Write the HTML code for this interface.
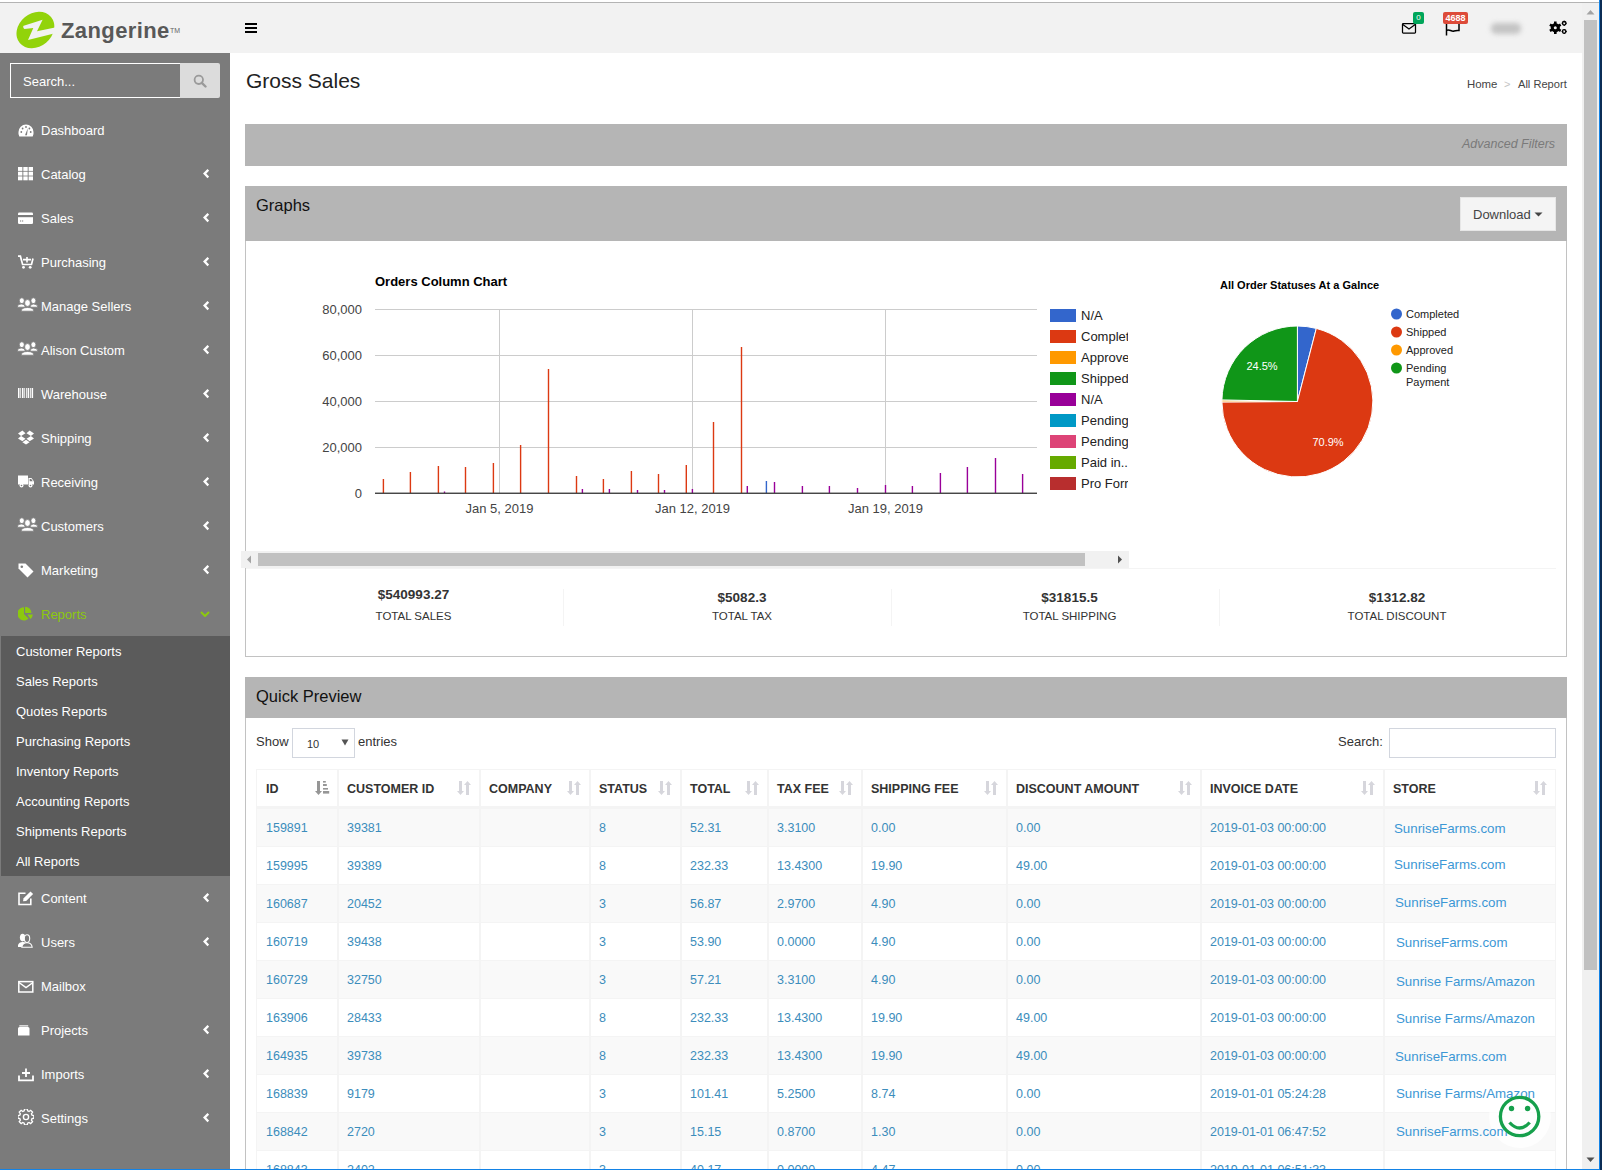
<!DOCTYPE html>
<html><head><meta charset="utf-8">
<style>
*{box-sizing:border-box;margin:0;padding:0}
html,body{width:1602px;height:1170px;overflow:hidden;background:#fff;font-family:"Liberation Sans",sans-serif;position:relative}
.a{position:absolute}
#topline{left:0;top:2px;width:1599px;height:1px;background:#b4b4b4}
#header{left:0;top:3px;width:1582px;height:50px;background:#f2f2f2}
#sidebar{left:0;top:53px;width:230px;height:1117px;background:#7b7b7b}
.mi{position:absolute;left:41px;color:#fff;font-size:13px;line-height:16px;white-space:nowrap}
.ico{position:absolute;left:18px;width:16px;height:16px}
.chev{position:absolute;left:203px;width:6px;height:10px}
#submenu{left:1px;top:636px;width:229px;height:240px;background:#5b5b5b}
.si{position:absolute;left:16px;color:#fff;font-size:13px;line-height:16px;white-space:nowrap}
#vscroll{left:1582px;top:3px;width:17px;height:1166px;background:#f0f0f0}
#blueR{left:1599px;top:0;width:1px;height:1170px;background:#1383e6}
#navyR{left:1600px;top:0;width:2px;height:1170px;background:#0b2d55}
#blueB{left:0;top:1169px;width:1600px;height:1px;background:#1383e6}
.ph{position:absolute;background:#b5b5b5}
.link{color:#3c8dbc}

</style></head><body>
<div class="a" id="topline"></div>
<div class="a" id="header"></div>
<div class="a" id="sidebar"></div>
<div class="a" id="submenu"></div>
<!-- logo -->
<svg class="a" style="left:14px;top:10px;width:42px;height:40px" viewBox="14 10 42 40">
<ellipse cx="35.4" cy="30" rx="20.4" ry="16.6" transform="rotate(-40 35.4 30)" fill="#92d30a"/>
<path d="M23.2 26.3Q23 28.6 24.5 29L33.3 28 28 40 56 33 55 27.5 37 31.3 42.6 19.7 24.5 25.4Q23.4 25.6 23.2 26.3Z" fill="#f2f2f2"/>
</svg>
<div class="a" style="left:61px;top:18px;font-size:22px;line-height:26px;font-weight:bold;color:#585858;letter-spacing:0.4px;white-space:nowrap">Zangerine</div>
<div class="a" style="left:170px;top:27px;font-size:7px;line-height:8px;color:#666">TM</div>
<!-- hamburger -->
<div class="a" style="left:245px;top:23px;width:12px;height:2px;background:#000"></div>
<div class="a" style="left:245px;top:27px;width:12px;height:2px;background:#000"></div>
<div class="a" style="left:245px;top:31px;width:12px;height:2px;background:#000"></div>
<!-- envelope -->
<svg class="a" style="left:1401px;top:22px;width:16px;height:12px" viewBox="0 0 16 12"><rect x="1.5" y="1.5" width="13" height="9.5" rx="0.8" fill="none" stroke="#000" stroke-width="1.25"/><path d="M1.8 2.5L8 7 14.2 2.5" fill="none" stroke="#000" stroke-width="1.25"/></svg>
<div class="a" style="left:1413px;top:12px;width:11px;height:12px;background:#00a65a;border-radius:2px;color:#fff;font-size:8px;line-height:12px;text-align:center">0</div>
<!-- flag -->
<svg class="a" style="left:1444px;top:22px;width:18px;height:14px" viewBox="0 0 18 14"><path d="M2.5 1V13.5" stroke="#000" stroke-width="1.5"/><path d="M2.5 8.5C5 6.5 7.5 10 10 9 12 8.2 14 8.5 15 8.5V1" fill="none" stroke="#000" stroke-width="1.5"/></svg>
<div class="a" style="left:1443px;top:12px;width:25px;height:12px;background:#dd4b39;border-radius:2px;color:#fff;font-size:9px;font-weight:bold;line-height:12px;text-align:center">4688</div>
<!-- blurred name -->
<div class="a" style="left:1491px;top:23px;width:30px;height:11px;background:#c4c4c4;border-radius:5px;filter:blur(2.5px)"></div>
<!-- gears -->
<svg class="a" style="left:1548px;top:20px;width:21px;height:16px" viewBox="1548 20 21 16">
<g fill="#000"><circle cx="1555.3" cy="27.8" r="4.6"/>
<g stroke="#000" stroke-width="2.6"><path d="M1555.3 21.6V34M1549.9 24.7L1560.7 30.9M1549.9 30.9L1560.7 24.7"/></g></g>
<circle cx="1555.3" cy="27.8" r="1.5" fill="#f2f2f2"/>
<g stroke="#000" stroke-width="1.3" fill="none"><circle cx="1564.2" cy="23.3" r="1.8"/><circle cx="1564.2" cy="31.5" r="1.8"/></g>
<g stroke="#000" stroke-width="1.1"><path d="M1564.2 20.7V25.9M1561.7 23.3H1566.7M1564.2 28.9V34.1M1561.7 31.5H1566.7"/></g>
<circle cx="1564.2" cy="23.3" r="0.9" fill="#f2f2f2"/><circle cx="1564.2" cy="31.5" r="0.9" fill="#f2f2f2"/>
</svg>
<!-- sidebar search -->
<div class="a" style="left:10px;top:63px;width:171px;height:35px;border:1px solid #fff;border-right:none;background:#7b7b7b"></div>
<div class="a" style="left:23px;top:74px;font-size:13px;line-height:16px;color:#fff">Search...</div>
<div class="a" style="left:180px;top:63px;width:40px;height:35px;background:#dcdcdc;border-radius:0 2px 2px 0"></div>
<svg class="a" style="left:193px;top:74px;width:14px;height:14px" viewBox="0 0 14 14"><circle cx="5.8" cy="5.8" r="4.2" fill="none" stroke="#9a9a9a" stroke-width="1.8"/><path d="M8.8 8.8L12.5 12.5" stroke="#9a9a9a" stroke-width="2.4" stroke-linecap="round"/></svg>

<div class="mi" style="top:123px;color:#fff">Dashboard</div>
<svg class="ico" style="top:123px" viewBox="0 0 16 16"><path d="M8 1.5A7.5 7.5 0 0 0 0.5 9 7 7 0 0 0 1.3 13.5H14.7A7 7 0 0 0 15.5 9 7.5 7.5 0 0 0 8 1.5Z" fill="#fff"/><circle cx="3.3" cy="9" r="0.9" fill="#7b7b7b"/><circle cx="4.6" cy="5.5" r="0.9" fill="#7b7b7b"/><circle cx="8" cy="4" r="0.9" fill="#7b7b7b"/><circle cx="12.7" cy="9" r="0.9" fill="#7b7b7b"/><circle cx="11.4" cy="5.5" r="0.9" fill="#7b7b7b"/><path d="M7 12.3L9.8 5.2L9 12.3Z" fill="#7b7b7b"/></svg>
<div class="mi" style="top:167px;color:#fff">Catalog</div>
<svg class="ico" style="top:165px" viewBox="0 0 16 16"><g fill="#fff"><rect x="0" y="2" width="4.4" height="3.9"/><rect x="5.3" y="2" width="4.4" height="3.9"/><rect x="10.6" y="2" width="4.4" height="3.9"/><rect x="0" y="6.7" width="4.4" height="3.9"/><rect x="5.3" y="6.7" width="4.4" height="3.9"/><rect x="10.6" y="6.7" width="4.4" height="3.9"/><rect x="0" y="11.4" width="4.4" height="3.9"/><rect x="5.3" y="11.4" width="4.4" height="3.9"/><rect x="10.6" y="11.4" width="4.4" height="3.9"/></g></svg>
<svg class="chev" style="top:169px" viewBox="0 0 6 10"><path d="M5.3 0.8L1.6 4.6 5.3 8.4" stroke="#fff" stroke-width="2.3" fill="none"/></svg>
<div class="mi" style="top:211px;color:#fff">Sales</div>
<svg class="ico" style="top:208.5px" viewBox="0 0 16 16"><rect x="0" y="3.5" width="15" height="11.5" rx="1.3" fill="#fff"/><rect x="0" y="6" width="15" height="2.2" fill="#7b7b7b"/><rect x="2" y="11.5" width="1.2" height="1" fill="#7b7b7b"/><rect x="4" y="11.5" width="1.2" height="1" fill="#7b7b7b"/></svg>
<svg class="chev" style="top:213px" viewBox="0 0 6 10"><path d="M5.3 0.8L1.6 4.6 5.3 8.4" stroke="#fff" stroke-width="2.3" fill="none"/></svg>
<div class="mi" style="top:255px;color:#fff">Purchasing</div>
<svg class="ico" style="top:253px" viewBox="0 0 16 16"><path d="M0 3.2H2.4L4.6 11.5H13.5L15 5.5" stroke="#fff" stroke-width="1.7" fill="none"/><path d="M5 6.6H13M9 4V9.5" stroke="#fff" stroke-width="1.6"/><circle cx="5.5" cy="14.3" r="1.4" fill="#fff"/><circle cx="12.2" cy="14.3" r="1.4" fill="#fff"/></svg>
<svg class="chev" style="top:257px" viewBox="0 0 6 10"><path d="M5.3 0.8L1.6 4.6 5.3 8.4" stroke="#fff" stroke-width="2.3" fill="none"/></svg>
<div class="mi" style="top:299px;color:#fff">Manage Sellers</div>
<svg class="a" style="left:17px;top:296.5px;width:22px;height:16px" viewBox="0 0 22 16"><g fill="#fff" stroke="#7b7b7b" stroke-width="0.8"><ellipse cx="4.8" cy="3.7" rx="2.5" ry="2.9"/><path d="M0.3 10.2Q0.5 7 4.8 7 8 7 8.3 10.2Z"/><ellipse cx="16.4" cy="3.7" rx="2.5" ry="2.9"/><path d="M13 10.2Q13.3 7 16.4 7 20.6 7 20.9 10.2Z"/><ellipse cx="10.5" cy="6" rx="2.9" ry="3.4"/><path d="M4.1 14.2Q4.4 10.5 10.5 10.5 16.6 10.5 16.9 14.2Z"/></g></svg>
<svg class="chev" style="top:301px" viewBox="0 0 6 10"><path d="M5.3 0.8L1.6 4.6 5.3 8.4" stroke="#fff" stroke-width="2.3" fill="none"/></svg>
<div class="mi" style="top:343px;color:#fff">Alison Custom</div>
<svg class="a" style="left:17px;top:340.5px;width:22px;height:16px" viewBox="0 0 22 16"><g fill="#fff" stroke="#7b7b7b" stroke-width="0.8"><ellipse cx="4.8" cy="3.7" rx="2.5" ry="2.9"/><path d="M0.3 10.2Q0.5 7 4.8 7 8 7 8.3 10.2Z"/><ellipse cx="16.4" cy="3.7" rx="2.5" ry="2.9"/><path d="M13 10.2Q13.3 7 16.4 7 20.6 7 20.9 10.2Z"/><ellipse cx="10.5" cy="6" rx="2.9" ry="3.4"/><path d="M4.1 14.2Q4.4 10.5 10.5 10.5 16.6 10.5 16.9 14.2Z"/></g></svg>
<svg class="chev" style="top:345px" viewBox="0 0 6 10"><path d="M5.3 0.8L1.6 4.6 5.3 8.4" stroke="#fff" stroke-width="2.3" fill="none"/></svg>
<div class="mi" style="top:387px;color:#fff">Warehouse</div>
<svg class="ico" style="top:385px" viewBox="0 0 16 16"><g fill="#fff"><rect x="0" y="3" width="1.5" height="10"/><rect x="2.3" y="3" width="0.8" height="10"/><rect x="4" y="3" width="1.5" height="10"/><rect x="6.3" y="3" width="0.8" height="10"/><rect x="8" y="3" width="0.8" height="10"/><rect x="9.6" y="3" width="1.6" height="10"/><rect x="12" y="3" width="0.8" height="10"/><rect x="13.6" y="3" width="1.5" height="10"/></g></svg>
<svg class="chev" style="top:389px" viewBox="0 0 6 10"><path d="M5.3 0.8L1.6 4.6 5.3 8.4" stroke="#fff" stroke-width="2.3" fill="none"/></svg>
<div class="mi" style="top:431px;color:#fff">Shipping</div>
<svg class="ico" style="top:429px" viewBox="0 0 16 16"><g fill="#fff"><path d="M4.4 1.5L0 4.4 3.1 6.9 7.5 4.2Z"/><path d="M11.6 1.5L16 4.4 12.9 6.9 8.5 4.2Z"/><path d="M0 9.4L4.4 12.3 7.5 9.7 3.1 6.9Z"/><path d="M16 9.4L11.6 12.3 8.5 9.7 12.9 6.9Z"/><path d="M4.4 13.2L8 15.5 11.6 13.2 8 10.8Z"/></g></svg>
<svg class="chev" style="top:433px" viewBox="0 0 6 10"><path d="M5.3 0.8L1.6 4.6 5.3 8.4" stroke="#fff" stroke-width="2.3" fill="none"/></svg>
<div class="mi" style="top:475px;color:#fff">Receiving</div>
<svg class="ico" style="top:473px" viewBox="0 0 16 16"><g fill="#fff"><rect x="0" y="2.5" width="10" height="9"/><path d="M10.5 5H13.5L16 8.5V11.5H10.5Z"/><circle cx="3.5" cy="12.5" r="2"/><circle cx="12.5" cy="12.5" r="2"/></g><circle cx="3.5" cy="12.5" r="0.8" fill="#7b7b7b"/><circle cx="12.5" cy="12.5" r="0.8" fill="#7b7b7b"/><path d="M11.7 6H13.2L14.8 8.3H11.7Z" fill="#7b7b7b"/></svg>
<svg class="chev" style="top:477px" viewBox="0 0 6 10"><path d="M5.3 0.8L1.6 4.6 5.3 8.4" stroke="#fff" stroke-width="2.3" fill="none"/></svg>
<div class="mi" style="top:519px;color:#fff">Customers</div>
<svg class="a" style="left:17px;top:516.5px;width:22px;height:16px" viewBox="0 0 22 16"><g fill="#fff" stroke="#7b7b7b" stroke-width="0.8"><ellipse cx="4.8" cy="3.7" rx="2.5" ry="2.9"/><path d="M0.3 10.2Q0.5 7 4.8 7 8 7 8.3 10.2Z"/><ellipse cx="16.4" cy="3.7" rx="2.5" ry="2.9"/><path d="M13 10.2Q13.3 7 16.4 7 20.6 7 20.9 10.2Z"/><ellipse cx="10.5" cy="6" rx="2.9" ry="3.4"/><path d="M4.1 14.2Q4.4 10.5 10.5 10.5 16.6 10.5 16.9 14.2Z"/></g></svg>
<svg class="chev" style="top:521px" viewBox="0 0 6 10"><path d="M5.3 0.8L1.6 4.6 5.3 8.4" stroke="#fff" stroke-width="2.3" fill="none"/></svg>
<div class="mi" style="top:563px;color:#fff">Marketing</div>
<svg class="ico" style="top:562px" viewBox="0 0 16 16"><path d="M0.5 1.5H7.5L15.5 9.5 9.5 15.5 0.5 6.5Z" fill="#fff"/><circle cx="3.8" cy="4.8" r="1.3" fill="#7b7b7b"/></svg>
<svg class="chev" style="top:565px" viewBox="0 0 6 10"><path d="M5.3 0.8L1.6 4.6 5.3 8.4" stroke="#fff" stroke-width="2.3" fill="none"/></svg>
<div class="mi" style="top:607px;color:#8cc90e">Reports</div>
<svg class="ico" style="top:605.5px" viewBox="0 0 16 16"><g fill="#8cc90e"><path d="M6 1.2V7.9L10.5 12.6A6.6 6.6 0 1 1 6 1.2Z"/><path d="M7.1 0.8V6.9H13.5A6.4 6.4 0 0 0 7.1 0.8Z"/><path d="M9.3 8.4H14.8A6.6 6.6 0 0 1 12.6 12.9Z"/></g></svg>
<svg class="a" style="left:200px;top:611px;width:10px;height:6px" viewBox="0 0 10 6"><path d="M1 1L5 5 9 1" stroke="#8cc90e" stroke-width="2" fill="none"/></svg>
<div class="mi" style="top:891px;color:#fff">Content</div>
<svg class="ico" style="top:889.5px" viewBox="0 0 16 16"><path d="M7.5 3.2H1V14.5H12.8V8.5" stroke="#fff" stroke-width="1.6" fill="none"/><path d="M5 11.2L5.6 8.3 12.5 1.4 15.1 4 8.2 10.9Z" fill="#fff"/></svg>
<svg class="chev" style="top:893px" viewBox="0 0 6 10"><path d="M5.3 0.8L1.6 4.6 5.3 8.4" stroke="#fff" stroke-width="2.3" fill="none"/></svg>
<div class="mi" style="top:935px;color:#fff">Users</div>
<svg class="ico" style="top:933px" viewBox="0 0 16 16"><g fill="#fff"><ellipse cx="4.6" cy="4.6" rx="2.7" ry="3.8"/><path d="M-0.4 14C-0.2 11 1.5 9.3 4.5 9.1 6 9.1 7 9.5 7 9.5L3.5 14Z"/></g><g fill="#7b7b7b" stroke="#fff" stroke-width="1.1"><path d="M3.8 14.3C4.2 11.2 6.5 9.7 9 9.7 11.5 9.7 13.8 11.2 14.2 14.3Z"/><ellipse cx="9" cy="5.6" rx="2.7" ry="3.9"/></g></svg>
<svg class="chev" style="top:937px" viewBox="0 0 6 10"><path d="M5.3 0.8L1.6 4.6 5.3 8.4" stroke="#fff" stroke-width="2.3" fill="none"/></svg>
<div class="mi" style="top:979px;color:#fff">Mailbox</div>
<svg class="ico" style="top:977.5px" viewBox="0 0 16 16"><rect x="0.8" y="3.6" width="14" height="10.4" stroke="#fff" stroke-width="1.5" fill="none"/><path d="M1 4.5L8 9.5 15 4.5" stroke="#fff" stroke-width="1.5" fill="none"/></svg>
<div class="mi" style="top:1023px;color:#fff">Projects</div>
<svg class="ico" style="top:1020.5px" viewBox="0 0 16 16"><path d="M0 7.5A1.5 1.5 0 0 1 1.5 6H10A1.5 1.5 0 0 1 11.5 7.5V14.5H0Z" fill="#fff"/><path d="M1.3 4.3H10.2V5.5H1.3Z" fill="#fff"/></svg>
<svg class="chev" style="top:1025px" viewBox="0 0 6 10"><path d="M5.3 0.8L1.6 4.6 5.3 8.4" stroke="#fff" stroke-width="2.3" fill="none"/></svg>
<div class="mi" style="top:1067px;color:#fff">Imports</div>
<svg class="ico" style="top:1066px" viewBox="0 0 16 16"><path d="M1 9.5V14.3H15V9.5" stroke="#fff" stroke-width="1.8" fill="none"/><path d="M8 2.5V11M4 7H12" stroke="#fff" stroke-width="1.8"/></svg>
<svg class="chev" style="top:1069px" viewBox="0 0 6 10"><path d="M5.3 0.8L1.6 4.6 5.3 8.4" stroke="#fff" stroke-width="2.3" fill="none"/></svg>
<div class="mi" style="top:1111px;color:#fff">Settings</div>
<svg class="ico" style="top:1109px" viewBox="0 0 16 16"><g fill="none" stroke="#fff" stroke-width="1.4"><path d="M6.6 0.9H9.4L9.8 2.9 11.3 3.6 13 2.4 15 4.4 13.8 6.1 14.4 7.6 16.4 8V10.8L14.4 11.2 13.8 12.7 15 14.4 13 16.4 11.3 15.2 9.8 15.9 9.4 17.9H6.6L6.2 15.9 4.7 15.2 3 16.4 1 14.4 2.2 12.7 1.6 11.2-0.4 10.8V8L1.6 7.6 2.2 6.1 1 4.4 3 2.4 4.7 3.6 6.2 2.9Z" transform="translate(0.3 -1) scale(0.95)"/><circle cx="8" cy="8" r="2.6"/></g></svg>
<svg class="chev" style="top:1113px" viewBox="0 0 6 10"><path d="M5.3 0.8L1.6 4.6 5.3 8.4" stroke="#fff" stroke-width="2.3" fill="none"/></svg>
<div class="si" style="top:644px">Customer Reports</div>
<div class="si" style="top:674px">Sales Reports</div>
<div class="si" style="top:704px">Quotes Reports</div>
<div class="si" style="top:734px">Purchasing Reports</div>
<div class="si" style="top:764px">Inventory Reports</div>
<div class="si" style="top:794px">Accounting Reports</div>
<div class="si" style="top:824px">Shipments Reports</div>
<div class="si" style="top:854px">All Reports</div>
<div class="a" style="left:246px;top:69px;font-size:21px;line-height:24px;color:#222">Gross Sales</div>
<div class="a" style="left:1467px;top:77px;font-size:11.4px;line-height:14px;color:#444;white-space:nowrap">Home</div>
<div class="a" style="left:1504px;top:77px;font-size:11px;line-height:14px;color:#c4c4c4;white-space:nowrap">&gt;</div>
<div class="a" style="left:1518px;top:77px;font-size:11.1px;line-height:14px;color:#444;white-space:nowrap">All Report</div>
<div class="ph" style="left:245px;top:124px;width:1322px;height:42px"></div>
<div class="a" style="left:1462px;top:137px;font-size:12.5px;line-height:14px;color:#7a7a7a;font-style:italic">Advanced Filters</div>
<!-- graphs panel -->
<div class="a" style="left:245px;top:186px;width:1322px;height:471px;border:1px solid #c2c2c2;border-top:none"></div>
<div class="ph" style="left:245px;top:186px;width:1322px;height:55px"></div>
<div class="a" style="left:256px;top:196px;font-size:16.5px;line-height:19px;color:#111">Graphs</div>
<div class="a" style="left:1460px;top:197px;width:96px;height:34px;background:#f4f4f4;border:1px solid #e6e6e6"></div>
<div class="a" style="left:1473px;top:207px;font-size:13px;line-height:15px;color:#444">Download</div>
<svg class="a" style="left:1534px;top:212px;width:9px;height:5px" viewBox="0 0 9 5"><path d="M0.5 0.5H8.5L4.5 4.5Z" fill="#444"/></svg>

<svg class="a" style="left:246px;top:241px;width:884px;height:330px" viewBox="246 241 884 330" font-family="Liberation Sans">
<text x="375" y="286" font-size="13" font-weight="bold" fill="#000">Orders Column Chart</text>
<rect x="375" y="309.0" width="662" height="1" fill="#cccccc"/>
<text x="362" y="314.0" font-size="13" fill="#444" text-anchor="end">80,000</text>
<rect x="375" y="355.0" width="662" height="1" fill="#cccccc"/>
<text x="362" y="360.0" font-size="13" fill="#444" text-anchor="end">60,000</text>
<rect x="375" y="401.0" width="662" height="1" fill="#cccccc"/>
<text x="362" y="406.0" font-size="13" fill="#444" text-anchor="end">40,000</text>
<rect x="375" y="447.0" width="662" height="1" fill="#cccccc"/>
<text x="362" y="452.0" font-size="13" fill="#444" text-anchor="end">20,000</text>
<text x="362" y="498.0" font-size="13" fill="#444" text-anchor="end">0</text>
<rect x="499.0" y="309" width="1" height="184" fill="#cccccc"/>
<text x="499.5" y="513" font-size="13" fill="#444" text-anchor="middle">Jan 5, 2019</text>
<rect x="692.0" y="309" width="1" height="184" fill="#cccccc"/>
<text x="692.5" y="513" font-size="13" fill="#444" text-anchor="middle">Jan 12, 2019</text>
<rect x="885.0" y="309" width="1" height="184" fill="#cccccc"/>
<text x="885.5" y="513" font-size="13" fill="#444" text-anchor="middle">Jan 19, 2019</text>
<rect x="382.7" y="479" width="1.4" height="14" fill="#dc3912"/>
<rect x="409.7" y="472" width="1.4" height="21" fill="#dc3912"/>
<rect x="437.7" y="466" width="1.4" height="27" fill="#dc3912"/>
<rect x="464.8" y="467" width="1.4" height="26" fill="#dc3912"/>
<rect x="492.7" y="463" width="1.4" height="30" fill="#dc3912"/>
<rect x="519.9" y="445" width="1.4" height="48" fill="#dc3912"/>
<rect x="547.8" y="369" width="1.4" height="124" fill="#dc3912"/>
<rect x="575.8" y="476" width="1.4" height="17" fill="#dc3912"/>
<rect x="602.6999999999999" y="479" width="1.4" height="14" fill="#dc3912"/>
<rect x="630.6999999999999" y="471" width="1.4" height="22" fill="#dc3912"/>
<rect x="657.8" y="474" width="1.4" height="19" fill="#dc3912"/>
<rect x="685.5999999999999" y="465" width="1.4" height="28" fill="#dc3912"/>
<rect x="712.8" y="422" width="1.4" height="71" fill="#dc3912"/>
<rect x="740.8" y="347" width="1.4" height="146" fill="#dc3912"/>
<rect x="443.8" y="491.5" width="1.4" height="1.5" fill="#990099"/>
<rect x="581.6999999999999" y="489" width="1.4" height="4" fill="#990099"/>
<rect x="608.6999999999999" y="489" width="1.4" height="4" fill="#990099"/>
<rect x="636.8" y="490" width="1.4" height="3" fill="#990099"/>
<rect x="663.8" y="490" width="1.4" height="3" fill="#990099"/>
<rect x="691.6999999999999" y="489" width="1.4" height="4" fill="#990099"/>
<rect x="746.5999999999999" y="486" width="1.4" height="7" fill="#990099"/>
<rect x="773.8" y="482" width="1.4" height="11" fill="#990099"/>
<rect x="801.6999999999999" y="486" width="1.4" height="7" fill="#990099"/>
<rect x="828.6999999999999" y="486" width="1.4" height="7" fill="#990099"/>
<rect x="856.8" y="488" width="1.4" height="5" fill="#990099"/>
<rect x="884.8" y="485" width="1.4" height="8" fill="#990099"/>
<rect x="911.6999999999999" y="486" width="1.4" height="7" fill="#990099"/>
<rect x="939.6999999999999" y="473" width="1.4" height="20" fill="#990099"/>
<rect x="966.6999999999999" y="467" width="1.4" height="26" fill="#990099"/>
<rect x="994.8" y="458" width="1.4" height="35" fill="#990099"/>
<rect x="1021.9" y="474" width="1.4" height="19" fill="#990099"/>
<rect x="765.7" y="481" width="1.4" height="12" fill="#3366cc"/>
<rect x="375" y="492.6" width="662" height="1.3" fill="#333"/>
<rect x="1050" y="309" width="26" height="13" fill="#3366cc"/>
<text x="1081" y="320" font-size="13" fill="#222">N/A</text>
<rect x="1050" y="330" width="26" height="13" fill="#dc3912"/>
<text x="1081" y="341" font-size="13" fill="#222">Complet</text>
<rect x="1050" y="351" width="26" height="13" fill="#ff9900"/>
<text x="1081" y="362" font-size="13" fill="#222">Approve</text>
<rect x="1050" y="372" width="26" height="13" fill="#109618"/>
<text x="1081" y="383" font-size="13" fill="#222">Shipped</text>
<rect x="1050" y="393" width="26" height="13" fill="#990099"/>
<text x="1081" y="404" font-size="13" fill="#222">N/A</text>
<rect x="1050" y="414" width="26" height="13" fill="#0099c6"/>
<text x="1081" y="425" font-size="13" fill="#222">Pending</text>
<rect x="1050" y="435" width="26" height="13" fill="#dd4477"/>
<text x="1081" y="446" font-size="13" fill="#222">Pending</text>
<rect x="1050" y="456" width="26" height="13" fill="#66aa00"/>
<text x="1081" y="467" font-size="13" fill="#222">Paid in..</text>
<rect x="1050" y="477" width="26" height="13" fill="#b82e2e"/>
<text x="1081" y="488" font-size="13" fill="#222">Pro Forr</text>
</svg>
<div class="a" style="left:1128px;top:300px;width:20px;height:200px;background:#fff"></div>
<div class="a" style="left:241px;top:551px;width:888px;height:17px;background:#f1f1f1"></div>
<div class="a" style="left:258px;top:553px;width:827px;height:13px;background:#c1c1c1"></div>
<svg class="a" style="left:246px;top:555px;width:6px;height:9px" viewBox="0 0 6 9"><path d="M5 0.5V8.5L1 4.5Z" fill="#a3a3a3"/></svg>
<svg class="a" style="left:1117px;top:555px;width:6px;height:9px" viewBox="0 0 6 9"><path d="M1 0.5V8.5L5 4.5Z" fill="#505050"/></svg>
<svg class="a" style="left:1150px;top:260px;width:400px;height:240px" viewBox="1150 260 400 240" font-family="Liberation Sans">
<text x="1220" y="289" font-size="11" font-weight="bold" fill="#000">All Order Statuses At a Galnce</text>
<path d="M1297.4 401.5L1297.40 326.00A75.5 75.5 0 0 1 1316.30 328.40Z" fill="#3366cc" stroke="#fff" stroke-width="1"/>
<path d="M1297.4 401.5L1316.30 328.40A75.5 75.5 0 1 1 1221.90 401.90Z" fill="#dc3912" stroke="#fff" stroke-width="1"/>
<path d="M1297.4 401.5L1221.90 401.90A75.5 75.5 0 0 1 1221.92 399.92Z" fill="#ff9900" stroke="#fff" stroke-width="1"/>
<path d="M1297.4 401.5L1221.92 399.92A75.5 75.5 0 0 1 1297.40 326.00Z" fill="#109618" stroke="#fff" stroke-width="1"/>
<text x="1262" y="370" font-size="11" fill="#fff" text-anchor="middle">24.5%</text>
<text x="1328" y="446" font-size="11" fill="#fff" text-anchor="middle">70.9%</text>
<circle cx="1396.5" cy="314" r="5.5" fill="#3366cc"/>
<text x="1406" y="318" font-size="11" fill="#222">Completed</text>
<circle cx="1396.5" cy="332" r="5.5" fill="#dc3912"/>
<text x="1406" y="336" font-size="11" fill="#222">Shipped</text>
<circle cx="1396.5" cy="350" r="5.5" fill="#ff9900"/>
<text x="1406" y="354" font-size="11" fill="#222">Approved</text>
<circle cx="1396.5" cy="368" r="5.5" fill="#109618"/>
<text x="1406" y="372" font-size="11" fill="#222">Pending</text>
<text x="1406" y="386" font-size="11" fill="#222">Payment</text>
</svg>
<div class="a" style="left:246px;top:568px;width:1310px;height:1px;background:#f4f4f4"></div>
<div class="a" style="left:313.5px;top:587px;width:200px;text-align:center;font-size:13.5px;line-height:16px;font-weight:bold;color:#333">$540993.27</div>
<div class="a" style="left:313.5px;top:609px;width:200px;text-align:center;font-size:11.5px;line-height:15px;color:#333">TOTAL SALES</div>
<div class="a" style="left:642px;top:590px;width:200px;text-align:center;font-size:13.5px;line-height:16px;font-weight:bold;color:#333">$5082.3</div>
<div class="a" style="left:642px;top:609px;width:200px;text-align:center;font-size:11.5px;line-height:15px;color:#333">TOTAL TAX</div>
<div class="a" style="left:969.5px;top:590px;width:200px;text-align:center;font-size:13.5px;line-height:16px;font-weight:bold;color:#333">$31815.5</div>
<div class="a" style="left:969.5px;top:609px;width:200px;text-align:center;font-size:11.5px;line-height:15px;color:#333">TOTAL SHIPPING</div>
<div class="a" style="left:1297px;top:590px;width:200px;text-align:center;font-size:13.5px;line-height:16px;font-weight:bold;color:#333">$1312.82</div>
<div class="a" style="left:1297px;top:609px;width:200px;text-align:center;font-size:11.5px;line-height:15px;color:#333">TOTAL DISCOUNT</div>
<div class="a" style="left:563px;top:589px;width:1px;height:37px;background:#f4f4f4"></div>
<div class="a" style="left:891px;top:589px;width:1px;height:37px;background:#f4f4f4"></div>
<div class="a" style="left:1219px;top:589px;width:1px;height:37px;background:#f4f4f4"></div>
<div class="a" style="left:245px;top:677px;width:1322px;height:500px;border:1px solid #c2c2c2;border-top:none"></div>
<div class="ph" style="left:245px;top:677px;width:1322px;height:41px"></div>
<div class="a" style="left:256px;top:687px;font-size:16.5px;line-height:19px;color:#111">Quick Preview</div>
<div class="a" style="left:256px;top:734px;font-size:13px;line-height:15px;color:#333">Show</div>
<div class="a" style="left:292px;top:728px;width:63px;height:30px;border:1px solid #d2d6de;background:#fff"></div>
<div class="a" style="left:307px;top:738px;font-size:11px;line-height:13px;color:#333">10</div>
<svg class="a" style="left:341px;top:739px;width:8px;height:7px" viewBox="0 0 8 7"><path d="M0.5 0.5H7.5L4 6.5Z" fill="#555"/></svg>
<div class="a" style="left:358px;top:734px;font-size:13px;line-height:15px;color:#333">entries</div>
<div class="a" style="left:1338px;top:734px;font-size:13px;line-height:15px;color:#333">Search:</div>
<div class="a" style="left:1389px;top:728px;width:167px;height:30px;border:1px solid #d2d6de;background:#fff"></div>
<div class="a" style="left:256px;top:769px;width:1300px;height:401px;border:1px solid #f4f4f4;border-bottom:none;background:#fff"></div>
<div class="a" style="left:266px;top:782px;font-size:12.5px;line-height:15px;font-weight:bold;color:#333;white-space:nowrap">ID</div>
<div class="a" style="left:347px;top:782px;font-size:12.5px;line-height:15px;font-weight:bold;color:#333;white-space:nowrap">CUSTOMER ID</div>
<div class="a" style="left:489px;top:782px;font-size:12.5px;line-height:15px;font-weight:bold;color:#333;white-space:nowrap">COMPANY</div>
<div class="a" style="left:599px;top:782px;font-size:12.5px;line-height:15px;font-weight:bold;color:#333;white-space:nowrap">STATUS</div>
<div class="a" style="left:690px;top:782px;font-size:12.5px;line-height:15px;font-weight:bold;color:#333;white-space:nowrap">TOTAL</div>
<div class="a" style="left:777px;top:782px;font-size:12.5px;line-height:15px;font-weight:bold;color:#333;white-space:nowrap">TAX FEE</div>
<div class="a" style="left:871px;top:782px;font-size:12.5px;line-height:15px;font-weight:bold;color:#333;white-space:nowrap">SHIPPING FEE</div>
<div class="a" style="left:1016px;top:782px;font-size:12.5px;line-height:15px;font-weight:bold;color:#333;white-space:nowrap">DISCOUNT AMOUNT</div>
<div class="a" style="left:1210px;top:782px;font-size:12.5px;line-height:15px;font-weight:bold;color:#333;white-space:nowrap">INVOICE DATE</div>
<div class="a" style="left:1393px;top:782px;font-size:12.5px;line-height:15px;font-weight:bold;color:#333;white-space:nowrap">STORE</div>
<div class="a" style="left:257px;top:808px;width:1298px;height:38px;background:#f9f9f9;border-top:1px solid #f4f4f4"></div>
<div class="a" style="left:257px;top:846px;width:1298px;height:38px;background:#fff;border-top:1px solid #f4f4f4"></div>
<div class="a" style="left:257px;top:884px;width:1298px;height:38px;background:#f9f9f9;border-top:1px solid #f4f4f4"></div>
<div class="a" style="left:257px;top:922px;width:1298px;height:38px;background:#fff;border-top:1px solid #f4f4f4"></div>
<div class="a" style="left:257px;top:960px;width:1298px;height:38px;background:#f9f9f9;border-top:1px solid #f4f4f4"></div>
<div class="a" style="left:257px;top:998px;width:1298px;height:38px;background:#fff;border-top:1px solid #f4f4f4"></div>
<div class="a" style="left:257px;top:1036px;width:1298px;height:38px;background:#f9f9f9;border-top:1px solid #f4f4f4"></div>
<div class="a" style="left:257px;top:1074px;width:1298px;height:38px;background:#fff;border-top:1px solid #f4f4f4"></div>
<div class="a" style="left:257px;top:1112px;width:1298px;height:38px;background:#f9f9f9;border-top:1px solid #f4f4f4"></div>
<div class="a" style="left:257px;top:1150px;width:1298px;height:38px;background:#fff;border-top:1px solid #f4f4f4"></div>
<div class="a" style="left:257px;top:806px;width:1298px;height:2px;background:#f4f4f4"></div>
<div class="a" style="left:337px;top:769px;width:2px;height:401px;background:#f4f4f4"></div>
<div class="a" style="left:479px;top:769px;width:2px;height:401px;background:#f4f4f4"></div>
<div class="a" style="left:589px;top:769px;width:2px;height:401px;background:#f4f4f4"></div>
<div class="a" style="left:680px;top:769px;width:2px;height:401px;background:#f4f4f4"></div>
<div class="a" style="left:767px;top:769px;width:2px;height:401px;background:#f4f4f4"></div>
<div class="a" style="left:861px;top:769px;width:2px;height:401px;background:#f4f4f4"></div>
<div class="a" style="left:1006px;top:769px;width:2px;height:401px;background:#f4f4f4"></div>
<div class="a" style="left:1200px;top:769px;width:2px;height:401px;background:#f4f4f4"></div>
<div class="a" style="left:1383px;top:769px;width:2px;height:401px;background:#f4f4f4"></div>
<div class="a" style="left:1555px;top:769px;width:1px;height:401px;background:#f4f4f4"></div>
<svg class="a" style="left:315px;top:781px;width:15px;height:14px" viewBox="0 0 15 14"><g fill="#969696"><rect x="2" y="0" width="3" height="10"/><path d="M0 10H7L3.5 14Z"/><rect x="8" y="0" width="2.8" height="1.6"/><rect x="8" y="3" width="3.8" height="2"/><rect x="8" y="7" width="5" height="1.6"/><rect x="8" y="10" width="6.2" height="2.6"/></g></svg>
<svg class="a" style="left:457px;top:781px;width:15px;height:14px" viewBox="0 0 15 14"><g fill="#d6d6dc"><rect x="2" y="0" width="3" height="10"/><path d="M0 10H7L3.5 14Z"/><rect x="9" y="4" width="3" height="10"/><path d="M7 4H14L10.5 0Z"/></g></svg>
<svg class="a" style="left:567px;top:781px;width:15px;height:14px" viewBox="0 0 15 14"><g fill="#d6d6dc"><rect x="2" y="0" width="3" height="10"/><path d="M0 10H7L3.5 14Z"/><rect x="9" y="4" width="3" height="10"/><path d="M7 4H14L10.5 0Z"/></g></svg>
<svg class="a" style="left:658px;top:781px;width:15px;height:14px" viewBox="0 0 15 14"><g fill="#d6d6dc"><rect x="2" y="0" width="3" height="10"/><path d="M0 10H7L3.5 14Z"/><rect x="9" y="4" width="3" height="10"/><path d="M7 4H14L10.5 0Z"/></g></svg>
<svg class="a" style="left:745px;top:781px;width:15px;height:14px" viewBox="0 0 15 14"><g fill="#d6d6dc"><rect x="2" y="0" width="3" height="10"/><path d="M0 10H7L3.5 14Z"/><rect x="9" y="4" width="3" height="10"/><path d="M7 4H14L10.5 0Z"/></g></svg>
<svg class="a" style="left:839px;top:781px;width:15px;height:14px" viewBox="0 0 15 14"><g fill="#d6d6dc"><rect x="2" y="0" width="3" height="10"/><path d="M0 10H7L3.5 14Z"/><rect x="9" y="4" width="3" height="10"/><path d="M7 4H14L10.5 0Z"/></g></svg>
<svg class="a" style="left:984px;top:781px;width:15px;height:14px" viewBox="0 0 15 14"><g fill="#d6d6dc"><rect x="2" y="0" width="3" height="10"/><path d="M0 10H7L3.5 14Z"/><rect x="9" y="4" width="3" height="10"/><path d="M7 4H14L10.5 0Z"/></g></svg>
<svg class="a" style="left:1178px;top:781px;width:15px;height:14px" viewBox="0 0 15 14"><g fill="#d6d6dc"><rect x="2" y="0" width="3" height="10"/><path d="M0 10H7L3.5 14Z"/><rect x="9" y="4" width="3" height="10"/><path d="M7 4H14L10.5 0Z"/></g></svg>
<svg class="a" style="left:1361px;top:781px;width:15px;height:14px" viewBox="0 0 15 14"><g fill="#d6d6dc"><rect x="2" y="0" width="3" height="10"/><path d="M0 10H7L3.5 14Z"/><rect x="9" y="4" width="3" height="10"/><path d="M7 4H14L10.5 0Z"/></g></svg>
<svg class="a" style="left:1533px;top:781px;width:15px;height:14px" viewBox="0 0 15 14"><g fill="#d6d6dc"><rect x="2" y="0" width="3" height="10"/><path d="M0 10H7L3.5 14Z"/><rect x="9" y="4" width="3" height="10"/><path d="M7 4H14L10.5 0Z"/></g></svg>
<div class="a" style="left:1489px;top:1086px;width:62px;height:62px;border-radius:50%;background:rgba(255,255,255,0.75)"></div>
<div class="a link" style="left:266px;top:821px;font-size:12.5px;line-height:15px;white-space:nowrap">159891</div>
<div class="a link" style="left:347px;top:821px;font-size:12.5px;line-height:15px;white-space:nowrap">39381</div>
<div class="a link" style="left:599px;top:821px;font-size:12.5px;line-height:15px;white-space:nowrap">8</div>
<div class="a link" style="left:690px;top:821px;font-size:12.5px;line-height:15px;white-space:nowrap">52.31</div>
<div class="a link" style="left:777px;top:821px;font-size:12.5px;line-height:15px;white-space:nowrap">3.3100</div>
<div class="a link" style="left:871px;top:821px;font-size:12.5px;line-height:15px;white-space:nowrap">0.00</div>
<div class="a link" style="left:1016px;top:821px;font-size:12.5px;line-height:15px;white-space:nowrap">0.00</div>
<div class="a link" style="left:1210px;top:821px;font-size:12.5px;line-height:15px;white-space:nowrap">2019-01-03 00:00:00</div>
<div class="a" style="left:1394px;top:821px;font-size:13.3px;line-height:15px;color:#3c97d5;white-space:nowrap">SunriseFarms.com</div>
<div class="a link" style="left:266px;top:859px;font-size:12.5px;line-height:15px;white-space:nowrap">159995</div>
<div class="a link" style="left:347px;top:859px;font-size:12.5px;line-height:15px;white-space:nowrap">39389</div>
<div class="a link" style="left:599px;top:859px;font-size:12.5px;line-height:15px;white-space:nowrap">8</div>
<div class="a link" style="left:690px;top:859px;font-size:12.5px;line-height:15px;white-space:nowrap">232.33</div>
<div class="a link" style="left:777px;top:859px;font-size:12.5px;line-height:15px;white-space:nowrap">13.4300</div>
<div class="a link" style="left:871px;top:859px;font-size:12.5px;line-height:15px;white-space:nowrap">19.90</div>
<div class="a link" style="left:1016px;top:859px;font-size:12.5px;line-height:15px;white-space:nowrap">49.00</div>
<div class="a link" style="left:1210px;top:859px;font-size:12.5px;line-height:15px;white-space:nowrap">2019-01-03 00:00:00</div>
<div class="a" style="left:1394px;top:857px;font-size:13.3px;line-height:15px;color:#3c97d5;white-space:nowrap">SunriseFarms.com</div>
<div class="a link" style="left:266px;top:897px;font-size:12.5px;line-height:15px;white-space:nowrap">160687</div>
<div class="a link" style="left:347px;top:897px;font-size:12.5px;line-height:15px;white-space:nowrap">20452</div>
<div class="a link" style="left:599px;top:897px;font-size:12.5px;line-height:15px;white-space:nowrap">3</div>
<div class="a link" style="left:690px;top:897px;font-size:12.5px;line-height:15px;white-space:nowrap">56.87</div>
<div class="a link" style="left:777px;top:897px;font-size:12.5px;line-height:15px;white-space:nowrap">2.9700</div>
<div class="a link" style="left:871px;top:897px;font-size:12.5px;line-height:15px;white-space:nowrap">4.90</div>
<div class="a link" style="left:1016px;top:897px;font-size:12.5px;line-height:15px;white-space:nowrap">0.00</div>
<div class="a link" style="left:1210px;top:897px;font-size:12.5px;line-height:15px;white-space:nowrap">2019-01-03 00:00:00</div>
<div class="a" style="left:1395px;top:895px;font-size:13.3px;line-height:15px;color:#3c97d5;white-space:nowrap">SunriseFarms.com</div>
<div class="a link" style="left:266px;top:935px;font-size:12.5px;line-height:15px;white-space:nowrap">160719</div>
<div class="a link" style="left:347px;top:935px;font-size:12.5px;line-height:15px;white-space:nowrap">39438</div>
<div class="a link" style="left:599px;top:935px;font-size:12.5px;line-height:15px;white-space:nowrap">3</div>
<div class="a link" style="left:690px;top:935px;font-size:12.5px;line-height:15px;white-space:nowrap">53.90</div>
<div class="a link" style="left:777px;top:935px;font-size:12.5px;line-height:15px;white-space:nowrap">0.0000</div>
<div class="a link" style="left:871px;top:935px;font-size:12.5px;line-height:15px;white-space:nowrap">4.90</div>
<div class="a link" style="left:1016px;top:935px;font-size:12.5px;line-height:15px;white-space:nowrap">0.00</div>
<div class="a link" style="left:1210px;top:935px;font-size:12.5px;line-height:15px;white-space:nowrap">2019-01-03 00:00:00</div>
<div class="a" style="left:1396px;top:935px;font-size:13.3px;line-height:15px;color:#3c97d5;white-space:nowrap">SunriseFarms.com</div>
<div class="a link" style="left:266px;top:973px;font-size:12.5px;line-height:15px;white-space:nowrap">160729</div>
<div class="a link" style="left:347px;top:973px;font-size:12.5px;line-height:15px;white-space:nowrap">32750</div>
<div class="a link" style="left:599px;top:973px;font-size:12.5px;line-height:15px;white-space:nowrap">3</div>
<div class="a link" style="left:690px;top:973px;font-size:12.5px;line-height:15px;white-space:nowrap">57.21</div>
<div class="a link" style="left:777px;top:973px;font-size:12.5px;line-height:15px;white-space:nowrap">3.3100</div>
<div class="a link" style="left:871px;top:973px;font-size:12.5px;line-height:15px;white-space:nowrap">4.90</div>
<div class="a link" style="left:1016px;top:973px;font-size:12.5px;line-height:15px;white-space:nowrap">0.00</div>
<div class="a link" style="left:1210px;top:973px;font-size:12.5px;line-height:15px;white-space:nowrap">2019-01-03 00:00:00</div>
<div class="a" style="left:1396px;top:974px;font-size:13.3px;line-height:15px;color:#3c97d5;white-space:nowrap">Sunrise Farms/Amazon</div>
<div class="a link" style="left:266px;top:1011px;font-size:12.5px;line-height:15px;white-space:nowrap">163906</div>
<div class="a link" style="left:347px;top:1011px;font-size:12.5px;line-height:15px;white-space:nowrap">28433</div>
<div class="a link" style="left:599px;top:1011px;font-size:12.5px;line-height:15px;white-space:nowrap">8</div>
<div class="a link" style="left:690px;top:1011px;font-size:12.5px;line-height:15px;white-space:nowrap">232.33</div>
<div class="a link" style="left:777px;top:1011px;font-size:12.5px;line-height:15px;white-space:nowrap">13.4300</div>
<div class="a link" style="left:871px;top:1011px;font-size:12.5px;line-height:15px;white-space:nowrap">19.90</div>
<div class="a link" style="left:1016px;top:1011px;font-size:12.5px;line-height:15px;white-space:nowrap">49.00</div>
<div class="a link" style="left:1210px;top:1011px;font-size:12.5px;line-height:15px;white-space:nowrap">2019-01-03 00:00:00</div>
<div class="a" style="left:1396px;top:1011px;font-size:13.3px;line-height:15px;color:#3c97d5;white-space:nowrap">Sunrise Farms/Amazon</div>
<div class="a link" style="left:266px;top:1049px;font-size:12.5px;line-height:15px;white-space:nowrap">164935</div>
<div class="a link" style="left:347px;top:1049px;font-size:12.5px;line-height:15px;white-space:nowrap">39738</div>
<div class="a link" style="left:599px;top:1049px;font-size:12.5px;line-height:15px;white-space:nowrap">8</div>
<div class="a link" style="left:690px;top:1049px;font-size:12.5px;line-height:15px;white-space:nowrap">232.33</div>
<div class="a link" style="left:777px;top:1049px;font-size:12.5px;line-height:15px;white-space:nowrap">13.4300</div>
<div class="a link" style="left:871px;top:1049px;font-size:12.5px;line-height:15px;white-space:nowrap">19.90</div>
<div class="a link" style="left:1016px;top:1049px;font-size:12.5px;line-height:15px;white-space:nowrap">49.00</div>
<div class="a link" style="left:1210px;top:1049px;font-size:12.5px;line-height:15px;white-space:nowrap">2019-01-03 00:00:00</div>
<div class="a" style="left:1395px;top:1049px;font-size:13.3px;line-height:15px;color:#3c97d5;white-space:nowrap">SunriseFarms.com</div>
<div class="a link" style="left:266px;top:1087px;font-size:12.5px;line-height:15px;white-space:nowrap">168839</div>
<div class="a link" style="left:347px;top:1087px;font-size:12.5px;line-height:15px;white-space:nowrap">9179</div>
<div class="a link" style="left:599px;top:1087px;font-size:12.5px;line-height:15px;white-space:nowrap">3</div>
<div class="a link" style="left:690px;top:1087px;font-size:12.5px;line-height:15px;white-space:nowrap">101.41</div>
<div class="a link" style="left:777px;top:1087px;font-size:12.5px;line-height:15px;white-space:nowrap">5.2500</div>
<div class="a link" style="left:871px;top:1087px;font-size:12.5px;line-height:15px;white-space:nowrap">8.74</div>
<div class="a link" style="left:1016px;top:1087px;font-size:12.5px;line-height:15px;white-space:nowrap">0.00</div>
<div class="a link" style="left:1210px;top:1087px;font-size:12.5px;line-height:15px;white-space:nowrap">2019-01-01 05:24:28</div>
<div class="a" style="left:1396px;top:1086px;font-size:13.3px;line-height:15px;color:#3c97d5;white-space:nowrap">Sunrise Farms/Amazon</div>
<div class="a link" style="left:266px;top:1125px;font-size:12.5px;line-height:15px;white-space:nowrap">168842</div>
<div class="a link" style="left:347px;top:1125px;font-size:12.5px;line-height:15px;white-space:nowrap">2720</div>
<div class="a link" style="left:599px;top:1125px;font-size:12.5px;line-height:15px;white-space:nowrap">3</div>
<div class="a link" style="left:690px;top:1125px;font-size:12.5px;line-height:15px;white-space:nowrap">15.15</div>
<div class="a link" style="left:777px;top:1125px;font-size:12.5px;line-height:15px;white-space:nowrap">0.8700</div>
<div class="a link" style="left:871px;top:1125px;font-size:12.5px;line-height:15px;white-space:nowrap">1.30</div>
<div class="a link" style="left:1016px;top:1125px;font-size:12.5px;line-height:15px;white-space:nowrap">0.00</div>
<div class="a link" style="left:1210px;top:1125px;font-size:12.5px;line-height:15px;white-space:nowrap">2019-01-01 06:47:52</div>
<div class="a" style="left:1396px;top:1124px;font-size:13.3px;line-height:15px;color:#3c97d5;white-space:nowrap">SunriseFarms.com</div>
<div class="a link" style="left:266px;top:1163px;font-size:12.5px;line-height:15px;white-space:nowrap">168843</div>
<div class="a link" style="left:347px;top:1163px;font-size:12.5px;line-height:15px;white-space:nowrap">2402</div>
<div class="a link" style="left:599px;top:1163px;font-size:12.5px;line-height:15px;white-space:nowrap">3</div>
<div class="a link" style="left:690px;top:1163px;font-size:12.5px;line-height:15px;white-space:nowrap">40.17</div>
<div class="a link" style="left:777px;top:1163px;font-size:12.5px;line-height:15px;white-space:nowrap">0.0000</div>
<div class="a link" style="left:871px;top:1163px;font-size:12.5px;line-height:15px;white-space:nowrap">4.47</div>
<div class="a link" style="left:1016px;top:1163px;font-size:12.5px;line-height:15px;white-space:nowrap">0.00</div>
<div class="a link" style="left:1210px;top:1163px;font-size:12.5px;line-height:15px;white-space:nowrap">2019-01-01 06:51:33</div>
<svg class="a" style="left:1490px;top:1087px;width:60px;height:60px" viewBox="1490 1087 60 60"><circle cx="1519.6" cy="1116.5" r="19.2" fill="none" stroke="#16a04c" stroke-width="3.3"/><circle cx="1511.5" cy="1108.5" r="2.7" fill="#16a04c"/><circle cx="1527.6" cy="1108.5" r="2.7" fill="#16a04c"/><path d="M1509.5 1122.5Q1519.6 1133.5 1529.7 1122.5" fill="none" stroke="#16a04c" stroke-width="3.3"/></svg>
<div class="a" id="vscroll"></div>
<svg class="a" style="left:1586px;top:9px;width:9px;height:6px" viewBox="0 0 9 6"><path d="M0.5 5.5L4.5 1 8.5 5.5Z" fill="#a3a3a3"/></svg>
<div class="a" style="left:1584px;top:20px;width:13px;height:950px;background:#c1c1c1"></div>
<svg class="a" style="left:1586px;top:1157px;width:9px;height:6px" viewBox="0 0 9 6"><path d="M0.5 0.5L4.5 5 8.5 0.5Z" fill="#505050"/></svg>
<div class="a" id="blueR"></div>
<div class="a" id="navyR"></div>
<div class="a" id="blueB"></div>
</body></html>
